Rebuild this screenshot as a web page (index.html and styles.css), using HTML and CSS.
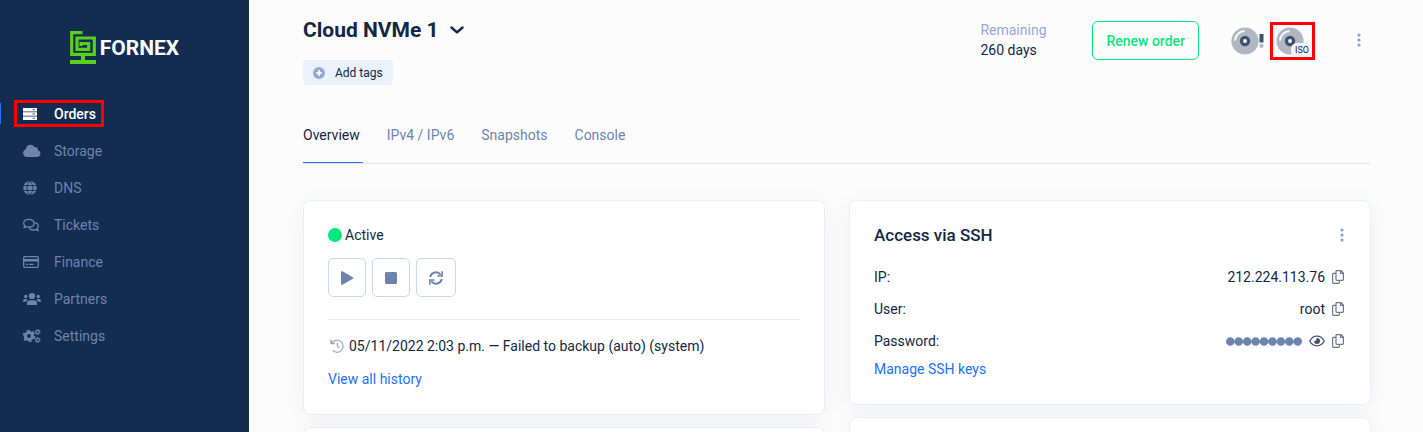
FILE: index.html
```html
<!DOCTYPE html>
<html lang="en">
<head>
  <meta charset="UTF-8">
  <meta name="viewport" content="width=device-width, initial-scale=1.0">
  <title>Cloud NVMe 1 - Fornex</title>
  <link rel="stylesheet" href="styles.css">
</head>
<body>

  <!-- shared icons -->
  <svg class="sprite" aria-hidden="true">
    <symbol id="i-copy" viewBox="0 0 12 14">
      <path d="M4.8.6H9l2.4 2.4v6.6a.8.8 0 0 1-.8.8H4.800a.8.8 0 0 1-.8-.8V1.4a.8.8 0 0 1 .8-.8zM8.6.8v2.6h2.6M4 3.4H1.4a.8.8 0 0 0-.8.8v8.4c0 .4.4.8.8.8h5.2a.8.8 0 0 0 .8-.8v-2.2" fill="none" stroke="currentColor" stroke-width="1.2"/>
    </symbol>
    <symbol id="i-dots" viewBox="0 0 4 14">
      <circle cx="2" cy="2" r="1.6"/><circle cx="2" cy="7" r="1.6"/><circle cx="2" cy="12" r="1.6"/>
    </symbol>
    <symbol id="i-disc" viewBox="0 0 28 28">
      <circle cx="14" cy="14" r="13.6" fill="#b0b7c3"/>
      <path d="M4 13.5A10 10 0 0 1 13.500 4" fill="none" stroke="#fff" stroke-width="1.8"/>
      <circle cx="14" cy="14" r="5.2" fill="#42526e"/>
      <circle cx="14" cy="14" r="1.9" fill="#fff"/>
    </symbol>
  </svg>

  <div class="layout">
    <aside class="sidebar">
      <a href="#" class="logo">
        <svg class="logo-mark" viewBox="0 0 26 33" aria-hidden="true">
          <path d="M12.500 1.700H1.700v21.600h22.600V7H7v11.300h11.700v-5.800H11v2.500" fill="none" stroke="currentColor" stroke-width="3.200"/>
          <path d="M11 24h4v5h11v4H0v-4h11z"/>
        </svg>
        <span class="logo-text">FORNEX</span>
      </a>

      <nav>
        <ul class="menu">
          <li class="active">
            <a href="#" class="marked">
              <svg viewBox="0 0 18 14"><path d="M0 1h14v3.400H0zM0 5.300h14v3.400H0zM0 9.600h14V13H0z"/><path d="M9.500 2.700H12M9.500 7H12M9.500 11.300H12" stroke="#132c50" stroke-width=".8"/></svg>
              Orders
            </a>
          </li>
          <li>
            <a href="#">
              <svg viewBox="0 0 18 14"><path d="M4 13a4 4 0 0 1-1.200-7.800A4.700 4.700 0 0 1 11.500 3a2.700 2.700 0 0 1 3.300 3.300A3.400 3.400 0 0 1 14.400 13z"/></svg>
              Storage
            </a>
          </li>
          <li>
            <a href="#">
              <svg viewBox="0 0 18 14"><circle cx="7" cy="7" r="6.8"/><path d="M0 4.600h14M0 9.400h14M7 0C3 4 3 10 7 14M7 0c4 4 4 10 0 14" fill="none" stroke="#132c50" stroke-width=".9"/></svg>
              DNS
            </a>
          </li>
          <li>
            <a href="#">
              <svg viewBox="0 0 18 14"><path d="M5.800 1.300c3 0 5.200 1.600 5.200 3.900S8.800 9.100 5.800 9.100c-.8 0-1.500-.1-2.200-.4-.8.6-1.700.9-2.800.9.6-.6 1-1.300 1.100-2C1.100 6.900.7 6.100.7 5.200c0-2.300 2.200-3.900 5.100-3.900zM11.800 4.600c2 .4 3.500 1.800 3.500 3.500 0 .9-.4 1.700-1.100 2.300.1.8.5 1.500 1.100 2.100-1.100 0-2-.3-2.800-.9-2.600.8-5.300.1-6.400-1.800" fill="none" stroke="currentColor" stroke-width="1.3" stroke-linejoin="round"/></svg>
              Tickets
            </a>
          </li>
          <li>
            <a href="#">
              <svg viewBox="0 0 18 14"><rect x=".7" y="1.700" width="14.600" height="10.600" rx="1" fill="none" stroke="currentColor" stroke-width="1.3"/><path d="M1 4h14v2.500H1zM3 8.800h2v1.300H3zM6 8.800h4.500v1.300H6z"/></svg>
              Finance
            </a>
          </li>
          <li>
            <a href="#">
              <svg viewBox="0 0 18 14"><circle cx="9" cy="4" r="3.1"/><path d="M4 13v-1.600A3.200 3.200 0 0 1 7.200 8.200h3.600a3.200 3.200 0 0 1 3.200 3.200V13z"/><circle cx="2.8" cy="4.5" r="1.7"/><circle cx="15.2" cy="4.5" r="1.7"/><path d="M0 9.800V9a2 2 0 0 1 2-2h1.600l1 .5A5 5 0 0 0 3 9.800zM18 9.800V9a2 2 0 0 0-2-2h-1.600l-1 .5A5 5 0 0 1 15 9.800z"/></svg>
              Partners
            </a>
          </li>
          <li>
            <a href="#">
              <svg viewBox="0 0 18 14"><g fill="none" stroke="currentColor"><circle cx="6" cy="7" r="3.5" stroke-width="3"/><circle cx="6" cy="7" r="5.4" stroke-width="1.8" stroke-dasharray="2.8 2.85"/><circle cx="14.6" cy="3" r="1.700" stroke-width="1.2"/><circle cx="14.6" cy="3" r="2.6" stroke-width="1" stroke-dasharray="1.3 1.4"/><circle cx="14.6" cy="11" r="1.7" stroke-width="1.2"/><circle cx="14.6" cy="11" r="2.6" stroke-width="1" stroke-dasharray="1.3 1.4"/></g></svg>
              Settings
            </a>
          </li>
        </ul>
      </nav>
    </aside>

    <main class="content">
      <header class="order-header">
        <div class="order-title">
          <h1>
            Cloud NVMe 1
            <button type="button" class="icon-button" aria-label="Switch order">
              <svg class="chevron" viewBox="0 0 14 8"><path d="M1.500 1.500 7 6.300l5.500-4.800" fill="none" stroke="currentColor" stroke-width="2.4" stroke-linecap="round" stroke-linejoin="round"/></svg>
            </button>
          </h1>
          <button type="button" class="add-tags">
            <svg viewBox="0 0 12 12"><circle cx="6" cy="6" r="6" fill="#97a9cf"/><path d="M6 3v6M3 6h6" stroke="#fff" stroke-width="1.6"/></svg>
            Add tags
          </button>
        </div>

        <div class="remaining">
          <span class="muted">Remaining</span>
          <span>260 days</span>
        </div>
        <button type="button" class="renew">Renew order</button>
        <div class="discs">
          <button type="button" class="icon-button rescue" aria-label="Rescue mode">
            <svg class="disc" viewBox="0 0 28 28"><use href="#i-disc"/></svg>
            <svg class="bang" viewBox="0 0 5 14"><path d="M.5 0h4v8.500h-4z" fill="#42526e"/><circle cx="2.5" cy="11.800" r="2.1" fill="#b0b7c3"/></svg>
          </button>
          <button type="button" class="icon-button iso marked" aria-label="Mount image">
            <svg class="disc" viewBox="0 0 28 28"><use href="#i-disc"/></svg>
            <span class="iso-badge">ISO</span>
          </button>
        </div>
        <button type="button" class="icon-button more" aria-label="More actions">
          <svg class="dots" viewBox="0 0 4 14"><use href="#i-dots"/></svg>
        </button>
      </header>

      <nav class="tabs">
        <a href="#" class="current">Overview</a>
        <a href="#">IPv4 / IPv6</a>
        <a href="#">Snapshots</a>
        <a href="#">Console</a>
      </nav>

      <div class="columns">
        <div class="column">
          <section class="card">
            <div class="status"><span class="status-dot"></span>Active</div>
            <div class="power">
              <button type="button" aria-label="Start"><svg viewBox="0 0 14 14"><path d="M1 1.200C1 .3 1.700-.1 2.500.3l10.300 5.900c.7.4.7 1.200 0 1.600L2.500 13.700c-.8.4-1.500 0-1.500-.9z"/></svg></button>
              <button type="button" aria-label="Stop"><svg viewBox="0 0 14 14"><rect x="1" y="1" width="12" height="12" rx="1.5"/></svg></button>
              <button type="button" class="restart" aria-label="Restart"><svg viewBox="0 0 14 14"><path d="M1.200 6A5.900 5.900 0 0 1 11.600 3.600M12.800 8A5.900 5.900 0 0 1 2.400 10.400" fill="none" stroke="currentColor" stroke-width="1.9"/><path d="M13.900.3v5.500H8.400V4.200h3.900V.3zM.1 13.700V8.200h5.500v1.600H1.700v3.900z"/></svg></button>
            </div>
            <hr>
            <p class="history">
              <svg viewBox="0 0 14 14"><path d="M2 4.200A6 6 0 1 1 2.600 11.200M1 .8v3.800h3.800M7.400 3.800v3.600l2 1.400" fill="none" stroke="currentColor" stroke-width="1.2"/><path d="M.6.8v4.200h4.200z"/></svg>
              05/11/2022 2:03 p.m. — Failed to backup (auto) (system)
            </p>
            <a href="#" class="link">View all history</a>
          </section>
          <section class="card"></section>
        </div>

        <div class="column">
          <section class="card">
            <div class="card-head">
              <h2>Access via SSH</h2>
              <button type="button" class="icon-button" aria-label="SSH actions">
                <svg class="dots" viewBox="0 0 4 14"><use href="#i-dots"/></svg>
              </button>
            </div>
            <dl>
              <div class="row">
                <dt>IP:</dt>
                <dd>212.224.113.76 <button type="button" class="icon-button copy" aria-label="Copy IP"><svg viewBox="0 0 12 14"><use href="#i-copy"/></svg></button></dd>
              </div>
              <div class="row">
                <dt>User:</dt>
                <dd>root <button type="button" class="icon-button copy" aria-label="Copy user"><svg viewBox="0 0 12 14"><use href="#i-copy"/></svg></button></dd>
              </div>
              <div class="row">
                <dt>Password:</dt>
                <dd>
                  <svg class="password" viewBox="0 0 76 9" role="img" aria-label="Hidden password"><path d="M4.300 4.500h68" fill="none" stroke="currentColor" stroke-width="8.6" stroke-linecap="round" stroke-dasharray="0 8.430"/></svg>
                  <button type="button" class="icon-button eye" aria-label="Show password"><svg viewBox="0 0 16 12"><path d="M.8 6C2.300 3 5 1.200 8 1.200S13.700 3 15.200 6C13.700 9 11 10.800 8 10.800S2.300 9 .8 6z" fill="none" stroke="currentColor" stroke-width="1.3"/><path d="M8 3a3 3 0 1 1-3 3c.9.4 2.100-.2 2.200-1.200C7.300 4.100 7.600 3 8 3z"/></svg></button>
                  <button type="button" class="icon-button copy" aria-label="Copy password"><svg viewBox="0 0 12 14"><use href="#i-copy"/></svg></button>
                </dd>
              </div>
            </dl>
            <a href="#" class="link">Manage SSH keys</a>
          </section>
          <section class="card"></section>
        </div>
      </div>
    </main>
  </div>

</body>
</html>
```

FILE: styles.css
```css
* {
  box-sizing: border-box;
}

body {
  margin: 0;
  font-family: Roboto, "Open Sans", sans-serif;
  font-size: 14px;
  line-height: 20px;
  color: #132743;
  background-color: #fcfcfd;
}

a {
  text-decoration: none;
}

button {
  font: inherit;
  color: inherit;
  cursor: pointer;
}

svg {
  display: block;
  flex: none;
  fill: currentColor;
}

h1, h2, p, ul, dl, dd {
  margin: 0;
  padding: 0;
}

.sprite {
  position: absolute;
  width: 0;
  height: 0;
}

.layout {
  display: flex;
  height: 100vh;
  overflow: hidden;
}

/* Sidebar */
.sidebar {
  flex: none;
  width: 249px;
  background-color: #132c50;
}

.logo {
  display: flex;
  justify-content: center;
  align-items: center;
  gap: 4px;
  padding: 31px 0;
  color: #fff;
}

.logo-mark {
  width: 26px;
  height: 33px;
  color: #5bd01c;
}

.logo-text {
  font-size: 21px;
  font-weight: 700;
}

.menu {
  list-style: none;
}

.menu li {
  display: flex;
  align-items: center;
  gap: 16px;
  height: 37px;
}

.menu li::before {
  content: "";
  width: 1px;
  height: 21px;
}

.menu .active::before {
  background-color: #2470f5;
}

.menu a {
  display: flex;
  align-items: center;
  gap: 13px;
  height: 21px;
  padding: 0 5px 0 6px;
  color: #6e84ae;
}

.menu .active a {
  color: #fff;
  font-weight: 500;
}

.menu svg {
  width: 18px;
  height: 14px;
}

.marked {
  outline: 3px solid #f00;
}

/* Order header */
.content {
  flex: 1;
  padding: 0 52px 0 54px;
}

.order-header {
  display: flex;
  align-items: flex-start;
  height: 107px;
  padding-top: 16px;
}

.order-title {
  flex: 1;
}

h1 {
  display: flex;
  align-items: center;
  gap: 11px;
  font-size: 21px;
  line-height: 28px;
  font-weight: 700;
}

.icon-button {
  padding: 0;
  border: 0;
  background: none;
}

.chevron {
  width: 14px;
  height: 8px;
}

.add-tags {
  display: flex;
  align-items: center;
  gap: 10px;
  height: 25px;
  margin-top: 16px;
  padding: 0 10px;
  border: 0;
  border-radius: 4px;
  background-color: #eaf2fb;
  font-size: 12px;
}

.add-tags svg {
  width: 12px;
  height: 12px;
}

.remaining {
  display: flex;
  flex-direction: column;
  padding-top: 4px;
  width: 112px;
}

.muted {
  color: #97a9cf;
}

.renew {
  height: 39px;
  margin-top: 5px;
  padding: 0 13px;
  border: 1px solid #0ae57f;
  border-radius: 6px;
  background: none;
  color: #0ae57f;
  font-weight: 500;
}

.discs {
  display: flex;
  gap: 9px;
  margin: 9px 45px 0 32px;
}

.disc {
  width: 28px;
  height: 28px;
}

.rescue {
  display: flex;
  align-items: center;
  height: 32px;
}

.bang {
  width: 5px;
  height: 14px;
}

.iso {
  position: relative;
  width: 39px;
  height: 32px;
  padding: 0 3px;
}

.iso-badge {
  position: absolute;
  right: 0;
  bottom: 0;
  padding: 0 3px 0 4px;
  border-radius: 6px;
  background-color: #f0f4fa;
  font-size: 9px;
  line-height: 14px;
}

.more {
  padding: 17px 10px 0 0;
}

.dots {
  width: 4px;
  height: 14px;
  color: #87a1cf;
}

/* Tabs */
.tabs {
  display: flex;
  gap: 24px;
  height: 57px;
  border-bottom: 1px solid #dce7f5;
}

.tabs a {
  padding: 18px 3px 0 0;
  color: #6e84ae;
}

.tabs .current {
  color: #132743;
  border-bottom: 1px solid #2a6fe8;
}

/* Cards */
.columns {
  display: grid;
  grid-template-columns: 1fr 1fr;
  gap: 24px;
  margin-top: 36px;
}

.column {
  display: flex;
  flex-direction: column;
  gap: 12px;
}

.card {
  min-height: 100px;
  padding: 24px 24px 25px;
  border: 1px solid #e7effa;
  border-radius: 8px;
  background-color: #fff;
  box-shadow: 0 4px 24px rgba(19, 39, 67, 0.05);
}

.status {
  display: flex;
  align-items: center;
  gap: 3px;
}

.status-dot {
  width: 14px;
  height: 14px;
  border-radius: 50%;
  background-color: #00e67e;
}

.power {
  display: flex;
  gap: 6px;
  margin-top: 13px;
}

.power button {
  display: flex;
  align-items: center;
  justify-content: center;
  width: 38px;
  height: 39px;
  padding: 0;
  border: 1px solid #c9d8ee;
  border-radius: 5px;
  background-color: #fff;
  color: #6e84ae;
}

.power .restart {
  width: 40px;
}

.power svg {
  width: 14px;
  height: 14px;
}

hr {
  margin: 22px 0 16px;
  border: 0;
  border-top: 1px solid #e0e8f2;
}

.history {
  display: flex;
  align-items: center;
  gap: 5px;
  padding-left: 2px;
  margin-bottom: 13px;
}

.history svg {
  width: 14px;
  height: 14px;
  color: #97a9cf;
}

.link {
  display: block;
  color: #2470f5;
}

.card-head {
  display: flex;
  justify-content: space-between;
  align-items: center;
  padding-right: 2px;
  margin-bottom: 16px;
}

h2 {
  font-size: 17px;
  line-height: 20px;
  font-weight: 500;
}

dl {
  margin-bottom: 2px;
}

.row,
.row dd {
  display: flex;
  align-items: center;
}

.row {
  justify-content: space-between;
  height: 32px;
}

.row dd {
  gap: 7px;
  padding-right: 2px;
}

.copy svg {
  width: 12px;
  height: 14px;
  color: #6a7890;
}

.eye svg {
  width: 16px;
  height: 12px;
  color: #42526e;
}

.password {
  width: 76px;
  height: 9px;
  color: #6e84ae;
}
```
